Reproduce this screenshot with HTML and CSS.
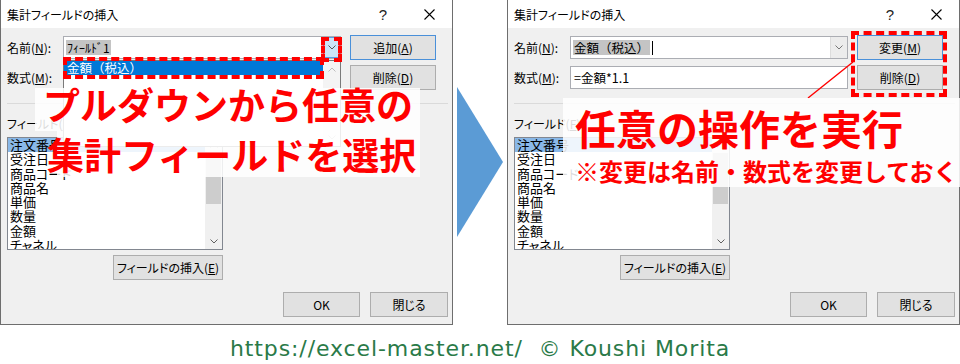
FILE: index.html
```html
<!DOCTYPE html>
<html lang="ja">
<head>
  <meta charset="UTF-8">
  <meta name="viewport" content="width=device-width, initial-scale=1.0">
  <title>集計フィールドの挿入</title>
  <link rel="stylesheet" href="styles.css">
</head>
<body>
  <div class="stage">
    <!-- 左: プルダウンを開いた状態 -->
    <section class="dialog">
      <header class="titlebar">
        <span class="title">集計フィールドの挿入</span>
        <span class="caption-btn help">?</span>
        <span class="caption-btn">
          <svg width="11" height="11" viewBox="0 0 11 11"><path d="M0.5 0.5 L10.5 10.5 M10.5 0.5 L0.5 10.5" stroke="#000" stroke-width="1.1" fill="none"/></svg>
        </span>
      </header>
      <div class="dialog-body">
        <div class="form-row">
          <label class="field-label">名前(<u>N</u>):</label>
          <div class="combo">
            <span class="combo-text"><span class="sel">ﾌｨｰﾙﾄﾞ1</span></span>
            <span class="combo-btn hot">
              <svg width="8" height="5" viewBox="0 0 8 5"><path d="M0.5 0.5 L4 4 L7.5 0.5" fill="none" stroke="#555"/></svg>
            </span>
          </div>
          <button class="btn btn-default">追加(<u>A</u>)</button>
        </div>
        <div class="form-row">
          <label class="field-label">数式(<u>M</u>):</label>
          <div class="textbox"></div>
          <button class="btn">削除(<u>D</u>)</button>
        </div>
        <hr class="sep">
        <div class="list-label">フィールド(<u>F</u>):</div>
        <div class="listbox">
          <ul class="list-items">
            <li class="selected">注文番号</li>
            <li>受注日</li>
            <li>商品コード</li>
            <li>商品名</li>
            <li>単価</li>
            <li>数量</li>
            <li>金額</li>
            <li>チャネル</li>
          </ul>
          <div class="scrollbar">
            <span class="sb-arrow"><svg width="8" height="5" viewBox="0 0 8 5"><path d="M0.5 4.5 L4 1 L7.5 4.5" fill="none" stroke="#a0a0a0"/></svg></span>
            <span class="sb-thumb"></span>
            <span class="sb-arrow"><svg width="8" height="5" viewBox="0 0 8 5"><path d="M0.5 0.5 L4 4 L7.5 0.5" fill="none" stroke="#606060"/></svg></span>
          </div>
        </div>
        <button class="btn btn-insert">フィールドの挿入(<u>E</u>)</button>
        <div class="dialog-actions">
          <button class="btn btn-ok">OK</button>
          <button class="btn btn-close">閉じる</button>
        </div>
      </div>

      <div class="dropdown">
        <div class="dropdown-items">
          <div class="dropdown-item">金額（税込）</div>
        </div>
        <div class="scrollbar dropdown-sb">
          <span class="sb-arrow"><svg width="8" height="5" viewBox="0 0 8 5"><path d="M0.5 4.5 L4 1 L7.5 4.5" fill="none" stroke="#bdbdbd"/></svg></span>
          <span class="sb-arrow"><svg width="8" height="5" viewBox="0 0 8 5"><path d="M0.5 0.5 L4 4 L7.5 0.5" fill="none" stroke="#bdbdbd"/></svg></span>
        </div>
      </div>
      <div class="mark mark-combo-btn"></div>
      <div class="mark mark-item"></div>
      <div class="callout callout-left">
        <span class="callout-line l1">プルダウンから任意の</span>
        <span class="callout-line l2">集計フィールドを選択</span>
      </div>
    </section>

    <div class="flow">
      <svg width="54" height="325" viewBox="0 0 54 325"><polygon points="4,87 50,162 4,237" fill="#5b9bd5"/></svg>
    </div>

    <!-- 右: 変更・削除 -->
    <section class="dialog">
      <header class="titlebar">
        <span class="title">集計フィールドの挿入</span>
        <span class="caption-btn help">?</span>
        <span class="caption-btn">
          <svg width="11" height="11" viewBox="0 0 11 11"><path d="M0.5 0.5 L10.5 10.5 M10.5 0.5 L0.5 10.5" stroke="#000" stroke-width="1.1" fill="none"/></svg>
        </span>
      </header>
      <div class="dialog-body">
        <div class="form-row">
          <label class="field-label">名前(<u>N</u>):</label>
          <div class="combo">
            <span class="combo-text full"><span class="sel">金額（税込）</span><span class="caret"></span></span>
            <span class="combo-btn">
              <svg width="8" height="5" viewBox="0 0 8 5"><path d="M0.5 0.5 L4 4 L7.5 0.5" fill="none" stroke="#777"/></svg>
            </span>
          </div>
          <button class="btn btn-default">変更(<u>M</u>)</button>
        </div>
        <div class="form-row">
          <label class="field-label">数式(<u>M</u>):</label>
          <div class="textbox"><span class="combo-text full">=金額*1.1</span></div>
          <button class="btn">削除(<u>D</u>)</button>
        </div>
        <hr class="sep">
        <div class="list-label">フィールド(<u>F</u>):</div>
        <div class="listbox">
          <ul class="list-items">
            <li class="selected">注文番号</li>
            <li>受注日</li>
            <li>商品コード</li>
            <li>商品名</li>
            <li>単価</li>
            <li>数量</li>
            <li>金額</li>
            <li>チャネル</li>
          </ul>
          <div class="scrollbar">
            <span class="sb-arrow"><svg width="8" height="5" viewBox="0 0 8 5"><path d="M0.5 4.5 L4 1 L7.5 4.5" fill="none" stroke="#a0a0a0"/></svg></span>
            <span class="sb-thumb"></span>
            <span class="sb-arrow"><svg width="8" height="5" viewBox="0 0 8 5"><path d="M0.5 0.5 L4 4 L7.5 0.5" fill="none" stroke="#606060"/></svg></span>
          </div>
        </div>
        <button class="btn btn-insert">フィールドの挿入(<u>E</u>)</button>
        <div class="dialog-actions">
          <button class="btn btn-ok">OK</button>
          <button class="btn btn-close">閉じる</button>
        </div>
      </div>

      <div class="mark mark-buttons"></div>
      <svg class="pointer" width="55" height="45" viewBox="0 0 55 45"><line x1="50" y1="4" x2="5" y2="40" stroke="#f00" stroke-width="1.5"/></svg>
      <div class="callout callout-right">
        <span class="callout-line r1">任意の操作を実行</span>
        <span class="callout-line r2">※変更は名前・数式を変更しておく</span>
      </div>
    </section>
  </div>

  <p class="credit">https://excel-master.net/&nbsp; © Koushi Morita</p>
</body>
</html>
```

FILE: styles.css
```css
* {
  box-sizing: border-box;
}
body {
  margin: 0;
  width: 960px;
  height: 364px;
  overflow: hidden;
  background: #fff;
  color: #000;
  font-family: "Noto Sans CJK JP", sans-serif;
}
.stage {
  display: flex;
  height: 325px;
}
.dialog {
  position: relative;
  width: 453px;
  height: 325px;
  background: #f0f0f0;
  border: 1px solid #6e6e6e;
  border-top: 0;
}
.titlebar {
  height: 28px;
  background: #fff;
  display: flex;
  align-items: center;
  padding-left: 6px;
  font-size: 12px;
  font-feature-settings: "palt";
}
.title {
  flex: 1;
}
.caption-btn {
  width: 46px;
  height: 28px;
  display: flex;
  align-items: center;
  justify-content: center;
}
.help {
  font-family: "Liberation Sans", sans-serif;
  font-size: 15px;
  color: #222;
}
.dialog-body {
  padding: 7px 4px 0 6px;
  font-size: 12px;
  font-feature-settings: "palt";
}
.form-row {
  display: flex;
  align-items: center;
  height: 25px;
}
.form-row + .form-row {
  margin-top: 5px;
}
.field-label {
  width: 56px;
}
.combo, .textbox {
  width: 278px;
  height: 23px;
  border: 1px solid #abadb3;
  background: #fff;
  display: flex;
  align-items: center;
}
.combo-text {
  flex: 1;
  display: flex;
  align-items: center;
  padding-left: 2px;
}
.combo-text.full {
  font-size: 12.5px;
  font-feature-settings: normal;
}
.textbox .combo-text {
  padding-left: 3px;
}
.sel {
  background: #c4c4c4;
  padding: 0 1px;
  line-height: 15px;
}
.caret {
  width: 1px;
  height: 14px;
  margin-left: 2px;
  background: #000;
}
.combo-btn {
  width: 17px;
  height: 21px;
  display: flex;
  align-items: center;
  justify-content: center;
  background: #ececec;
  border-left: 1px solid #dcdcdc;
}
.combo-btn.hot {
  background: #cce4f7;
  border: 1px solid #569de5;
}
.btn {
  font-family: inherit;
  font-size: 12px;
  font-feature-settings: "palt";
  color: #000;
  padding: 0;
  height: 25px;
  background: #e1e1e1;
  border: 1px solid #adadad;
}
.form-row .btn {
  margin-left: 9px;
  width: 86px;
}
.btn-default {
  border-color: #4a90d9;
}
.sep {
  margin: 13px 0 0;
  border: 0;
  border-top: 1px solid #dadada;
}
.list-label {
  margin-top: 12px;
  line-height: 16px;
}
.listbox {
  margin-top: 5px;
  width: 216px;
  height: 113px;
  border: 1px solid #828790;
  background: #fff;
  display: flex;
  overflow: hidden;
}
.list-items {
  flex: 1;
  margin: 0;
  padding: 0;
  list-style: none;
  font-size: 13px;
}
.list-items li {
  height: 14.3px;
  line-height: 14.3px;
  padding-left: 2px;
}
.list-items .selected {
  background: #89b8e8;
}
.scrollbar {
  width: 17px;
  background: #f0f0f0;
  display: flex;
  flex-direction: column;
  justify-content: space-between;
  align-items: center;
}
.sb-arrow {
  height: 17px;
  display: flex;
  align-items: center;
}
.sb-thumb {
  width: 15px;
  height: 57px;
  margin-bottom: 30px;
  background: #cdcdcd;
}
.btn-insert {
  display: block;
  margin: 5px 0 0 106px;
  width: 110px;
}
.dialog-actions {
  margin-top: 12px;
  display: flex;
  justify-content: flex-end;
  gap: 10px;
}
.btn-ok {
  width: 77px;
}
.btn-close {
  width: 78px;
}
.flow {
  width: 54px;
}

/* 開いたプルダウン */
.dropdown {
  position: absolute;
  left: 62px;
  top: 60px;
  width: 278px;
  height: 87px;
  background: #fff;
  border: 1px solid #7a7a7a;
  display: flex;
  font-size: 12.5px;
}
.dropdown-items {
  flex: 1;
}
.dropdown-item {
  height: 14px;
  line-height: 14px;
  padding-left: 3px;
  background: #0078d7;
  color: #fff;
}
.dropdown-sb {
  background: #f4f4f4;
}

/* 赤の点線枠と吹き出し */
.mark {
  position: absolute;
  border: 4px dashed #f00;
}
.mark-combo-btn {
  left: 320px;
  top: 37px;
  width: 21px;
  height: 25px;
}
.mark-item {
  left: 62px;
  top: 57px;
  width: 261px;
  height: 22px;
}
.mark-buttons {
  left: 343px;
  top: 31px;
  width: 96px;
  height: 66px;
}
.pointer {
  position: absolute;
  left: 295px;
  top: 58px;
}
.callout {
  position: absolute;
  color: #f00;
  font-weight: 700;
  white-space: nowrap;
}
.callout-line {
  display: block;
  background: rgba(255, 255, 255, 0.86);
}
.callout-left {
  left: 34px;
  top: 88px;
  font-size: 37px;
}
.l1 {
  width: 385px;
  line-height: 32px;
  padding: 0 0 11px 8px;
}
.l2 {
  margin-left: 22px;
  width: 363px;
  line-height: 46px;
  text-indent: -10px;
}
.callout-right {
  left: 55px;
  top: 98px;
  width: 397px;
}
.r1 {
  font-size: 41px;
  line-height: 59px;
  padding-left: 12px;
}
.r2 {
  font-size: 24px;
  line-height: 27px;
  padding: 0 0 3px 12px;
}

.credit {
  margin: 0;
  padding-top: 9px;
  line-height: 29px;
  text-align: center;
  font-family: "DejaVu Sans", sans-serif;
  font-size: 22px;
  letter-spacing: 0.9px;
  color: #2a7a48;
}
```
